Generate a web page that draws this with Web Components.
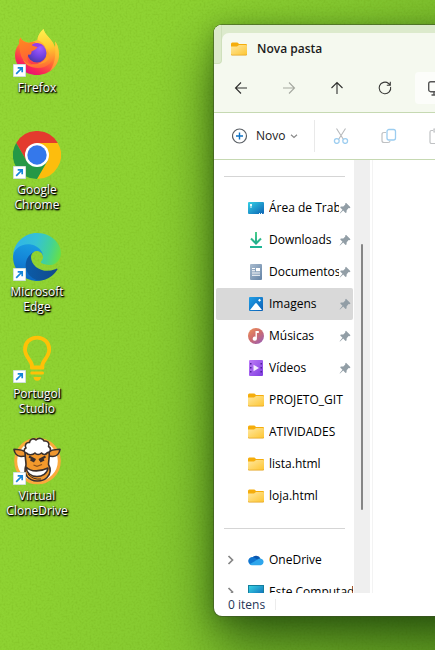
<!DOCTYPE html>
<html lang="pt-BR">
<head>
<meta charset="utf-8">
<meta name="viewport" content="width=device-width, initial-scale=1">
<title>Nova pasta</title>
<style>
html, body { height: 100%; margin: 0; }
body { font: 12px/16px "Open Sans", "Noto Sans", sans-serif; color: #000; overflow: hidden; }
</style>
</head>
<body>
<desk-top>
  <desk-shortcut icon="firefox">Firefox</desk-shortcut>
  <desk-shortcut icon="chrome">Google Chrome</desk-shortcut>
  <desk-shortcut icon="edge">Microsoft Edge</desk-shortcut>
  <desk-shortcut icon="bulb">Portugol Studio</desk-shortcut>
  <desk-shortcut icon="sheep">Virtual CloneDrive</desk-shortcut>
  <explorer-window slot="window">
    <window-tab slot="tab" icon="folder">Nova pasta</window-tab>
    <nav-bar slot="nav"></nav-bar>
    <command-bar slot="commands"></command-bar>
    <side-pane slot="side">
      <side-rule></side-rule>
      <side-item icon="desktop" pinned>Área de Trabalho</side-item>
      <side-item icon="download" pinned>Downloads</side-item>
      <side-item icon="document" pinned>Documentos</side-item>
      <side-item icon="image" pinned selected>Imagens</side-item>
      <side-item icon="music" pinned>Músicas</side-item>
      <side-item icon="video" pinned>Vídeos</side-item>
      <side-item icon="folder">PROJETO_GIT</side-item>
      <side-item icon="folder">ATIVIDADES</side-item>
      <side-item icon="folder">lista.html</side-item>
      <side-item icon="folder">loja.html</side-item>
      <side-rule></side-rule>
      <side-item icon="onedrive" expandable>OneDrive</side-item>
      <side-item icon="computer" expandable>Este Computador</side-item>
    </side-pane>
    <span slot="status">0 itens</span>
  </explorer-window>
</desk-top>

<script>
const ICONS = {
  firefox: [48, `<defs>
    <linearGradient id="a" x1=".8" y1="0" x2=".3" y2="1"><stop offset="0" stop-color="#fff14a"/><stop offset=".35" stop-color="#ffb52e"/><stop offset=".6" stop-color="#ff6a33"/><stop offset=".85" stop-color="#f8235a"/><stop offset="1" stop-color="#e0107c"/></linearGradient>
    <linearGradient id="b" x1=".4" y1="0" x2=".5" y2="1"><stop offset="0" stop-color="#fff350"/><stop offset=".5" stop-color="#ffca30"/><stop offset="1" stop-color="#ff6a33"/></linearGradient>
    <radialGradient id="c" cx=".65" cy=".25" r=".8"><stop offset="0" stop-color="#a15cff"/><stop offset=".6" stop-color="#7040dc"/><stop offset="1" stop-color="#4b3aa5"/></radialGradient>
    <linearGradient id="d" x1=".3" y1="0" x2=".5" y2="1"><stop offset="0" stop-color="#ff8a20"/><stop offset="1" stop-color="#ff5b38"/></linearGradient></defs>
    <path fill="url(#a)" d="M7.500 8.500C6 11 6 13 6.300 14.500C3.500 18 2 22 2 26C2 37 11.500 46 24 46C36.500 46 46 37 46 25.500C46 20 44.500 15 42 12.500C42.500 15 42.500 16.500 42 18C40 12 36.500 9.500 34 6.500C31.500 4 31 2 30.500 0C27 3 24.500 7 24.500 11L16 14C13 13 9 12 7.500 8.500Z"/>
    <path fill="url(#b)" d="M30.500 0C31 3 33 5 35.500 8C39 12 41.500 16 41.500 22C41.500 33 34 39 25 39C17 39 11.500 35.500 10 30C15 36 27 38 32 30C36 23 32.500 17 29.500 14C27 12 25.500 11 24.500 11C24.500 7 27 3 30.500 0Z"/>
    <path fill="#ffcb39" d="M42 12.500C44.500 15 46 20 46 25.500C46 33 42 39 36.500 42.500C41 36 43 29 42 18Z" opacity=".5"/>
    <circle cx="24" cy="24" r="9.500" fill="url(#c)"/>
    <path fill="#983bea" d="M17 17C20 13 27 13 31 17C28 16.500 26 17 24 18.500Z"/>
    <path fill="url(#d)" d="M7.500 8.500C9 12 12 14 16 13.700C18 12.700 21 12.800 23 13.300C20.500 14 19 15.300 19 16.500C21 17.500 23.500 17.500 24.500 18C24 20 21 21 18.500 22.500C18.500 25 18 26 15.500 25.500C13 29 15 34 20 36C11 35 6.500 29 6.300 14.500C6 13 6 11 7.500 8.500Z"/>
    <path fill="#ff9d2b" d="M33.500 19C36 25 33 33 25 34.500C30 35.500 36 32 37 27Z"/>`],
  chrome: [48, `<path fill="#e33b2e" d="M24 12H44.800A24 24 0 0 0 3.200 12L13.600 30Z"/>
    <path fill="#fdbd0d" d="M44.800 12A24 24 0 0 1 24 48L34.400 30L24 12Z"/>
    <path fill="#259846" d="M3.200 12A24 24 0 0 0 24 48L34.400 30H24L13.600 30Z"/>
    <circle cx="24" cy="24" r="12" fill="#fff"/><circle cx="24" cy="24" r="9.700" fill="#3478eb"/>`],
  edge: [256, `<defs>
    <linearGradient id="a" x1=".2" y1=".5" x2="1" y2=".5"><stop offset="0" stop-color="#0c59a4"/><stop offset="1" stop-color="#114a8b"/></linearGradient>
    <linearGradient id="b" x1=".6" y1="0" x2=".4" y2="1"><stop offset="0" stop-color="#1ba0e2"/><stop offset=".5" stop-color="#1384d8"/><stop offset="1" stop-color="#0a64c0"/></linearGradient>
    <linearGradient id="c" x1="0" y1=".4" x2="1" y2=".6"><stop offset="0" stop-color="#2fb3ea"/><stop offset=".45" stop-color="#36c2d4"/><stop offset=".75" stop-color="#42d298"/><stop offset="1" stop-color="#66e048"/></linearGradient></defs>
    <path fill="url(#a)" d="M231 190.500c-3.400 1.800-6.900 3.400-10.500 4.700a101.400 101.400 0 0 1-35.900 6.500c-47.300 0-88.500-32.500-88.500-74.300.1-11.400 6.300-21.900 16.400-27.200-42.800 1.800-53.800 46.400-53.800 72.500 0 73.900 68.100 81.400 82.800 81.400 7.900 0 19.800-2.300 27-4.600l1.300-.4a128.300 128.300 0 0 0 66.600-52.800 4 4 0 0 0-5.400-5.800z"/>
    <path fill="url(#b)" d="M105.700 241.400A79.200 79.200 0 0 1 83 220.100a80.700 80.700 0 0 1 29.500-120c3.200-1.500 8.500-4.100 15.600-4 10.100.1 19.700 4.900 25.700 13 4 5.400 6.300 11.900 6.400 18.700 0-.2 24.500-79.600-80-79.600-43.900 0-80 41.700-80 78.200-.2 19.300 4 38.500 12.100 56a128 128 0 0 0 156.400 67 75.500 75.500 0 0 1-62.800-8z"/>
    <path fill="url(#c)" d="M152.300 148.900c-.9 1-3.400 2.500-3.400 5.600 0 2.600 1.700 5.200 4.800 7.300 14.300 10 41.400 8.600 41.500 8.600 10.700 0 21.100-2.900 30.300-8.300 18.800-11 30.400-31.100 30.400-52.900.3-22.400-8-37.300-11.300-43.900C223.300 23.800 177.700 0 128 0 58 0 1 56.200 0 126.200c.5-36.500 36.800-66 80-66 3.500 0 23.500.3 42 10.100 16.300 8.600 24.900 18.900 30.800 29.200 6.200 10.700 7.300 24.100 7.300 29.500 0 5.300-2.700 13.300-7.800 19.900z"/>`],
  bulb: [48, `<path d="M19 31C19 26 12 22 12 14.500C12 7.500 17 2.700 24 2.700S36.200 7.500 36.200 14.500C36.200 22 29.200 26 29.200 31" fill="none" stroke="#ffc107" stroke-width="3.800"/>
    <path fill="#ffc107" d="M17 30.500H31.300V33Q31.300 34.500 29.800 34.500H18.500Q17 34.500 17 33ZM18.500 36.500H29.800Q31 36.500 31 38T29.500 39.600H18.700Q17.300 39.600 17.300 38T18.500 36.500ZM20.500 42H28Q27.800 45.700 24.200 45.700T20.500 42Z"/>`],
  sheep: [48, `<circle cx="24.500" cy="24" r="21.800" fill="#fff" stroke="#fbaa3c" stroke-width="3"/>
    <g stroke="#3a302c" stroke-width="1.600" stroke-linejoin="round">
    <path fill="#f0962f" d="M12 14.500C8 12 4 12.800 1 12.300C1.500 16 4 19.500 8 19.500L13 19ZM36 14.500C40 12 44 12.800 47 12.300C46.500 16 44 19.500 40 19.500L35 19Z"/>
    <path fill="#f39a2c" d="M12.500 14H36C37 19 35.500 23 35.500 27.500C38 32 37.500 37 34 40.500C29 45.500 19 45 14.500 40C11.500 36.500 11.500 32 13 28C13 23 11.500 19 12.500 14Z"/>
    <path fill="#fff" d="M13.500 16C10.500 15.500 10.500 12 13 11C11 8 13.500 5 16.500 5.500C17 2 21 .8 23 3C26 .2 30 1.500 31 4C34.500 3.500 37 6 35.500 9.500C38.500 11 38 15.500 34.500 15.500C33 18 30 18 28.500 16C26.500 18 23.500 18 22 16C20 18 15 18.500 13.500 16Z"/>
    <path fill="#fff" d="M13 30C18 35.500 28 34.500 35 31C34.500 36.500 29 39.500 24 39.500C18 39.500 13.500 36 13 30Z"/></g>
    <path d="M16 19.500L22.500 23M32.500 19.500L26 23M17.500 22.500L21.500 24.500M31 22.500L27 24.500" fill="none" stroke="#3a302c" stroke-width="2"/>
    <path d="M20.500 28L24 29.300L29 27.500" fill="none" stroke="#8b531c" stroke-width="1.300"/>
    <path d="M15 37Q20 43 28 42" fill="none" stroke="#3a302c"/>`],
  shortcut: [13, `<path fill="#fff" stroke="#cfe0dc" d="M.5.5H12.500V12.500H.5Z"/><path fill="none" stroke="#1586d9" stroke-width="1.700" d="M3.200 9.800L8.500 4.500M4.700 3.800H9.200V8.300"/>`],
  folder: [16, `<defs><linearGradient id="a" x2="1" y2="1"><stop offset="0" stop-color="#ffe8a0"/><stop offset="1" stop-color="#fdc634"/></linearGradient></defs>
    <path fill="#f5ad0c" d="M0 3Q0 1.500 1.300 1.500H6Q7 1.500 7.500 2.500L8 3H15Q16 3 16 4V6H0Z"/>
    <path fill="#e4a11b" d="M0 6H16V13.500Q16 14.500 15 14.500H1Q0 14.500 0 13.500Z"/>
    <path fill="url(#a)" d="M0 5.500H6L8 4H15Q16 4 16 5V12.700Q16 13.700 15 13.700H1Q0 13.700 0 12.700Z"/>`],
  desktop: [16, `<defs><linearGradient id="a" x2="1" y2="1"><stop offset="0" stop-color="#35d1e6"/><stop offset="1" stop-color="#0b62b4"/></linearGradient></defs>
    <rect y="2" width="16" height="12" rx="1" fill="url(#a)"/><path fill="#e9fbff" d="M2 4H4V6H2ZM2 6.500H4V7.500H2ZM11 13H12V14H11ZM13 13H14V14H13Z"/>`],
  computer: [16, `<defs><linearGradient id="a" x2="1" y2="1"><stop offset="0" stop-color="#38d6e6"/><stop offset="1" stop-color="#0b62b4"/></linearGradient></defs>
    <rect x=".5" y="1.500" width="15" height="11" fill="url(#a)" stroke="#137f9d"/><path fill="#63808f" d="M5 14H11V15H5Z"/>`],
  download: [16, `<defs><linearGradient id="a" gradientUnits="userSpaceOnUse" x1="8" y1="0" x2="8" y2="16"><stop offset="0" stop-color="#4bd08b"/><stop offset="1" stop-color="#0d9e8d"/></linearGradient></defs>
    <path fill="none" stroke="url(#a)" stroke-width="2" d="M8.010 0L8 11.500M3 6.500L8 11.500L13 6.500"/><path fill="#1fb594" d="M2 14H14V16H2Z"/>`],
  document: [16, `<defs><linearGradient id="a" x2="1" y2="1"><stop offset="0" stop-color="#a9bccf"/><stop offset="1" stop-color="#6483a6"/></linearGradient></defs>
    <rect x="2" width="12" height="16" rx="1" fill="url(#a)"/><path fill="#fff" d="M4 4H7V5H4ZM4 6.200H7V7.200H4ZM8 4H12V7.200H8ZM4 8.500H12V9.500H4ZM4 10.800H12V11.800H4Z"/>`],
  image: [16, `<defs><linearGradient id="a" x2="1" y2="1"><stop offset="0" stop-color="#229fe6"/><stop offset="1" stop-color="#0a5fb5"/></linearGradient></defs>
    <rect x="1" y="1" width="14" height="14" rx="1" fill="url(#a)"/><path fill="#fff" d="M2 14L7.200 7.500Q8 6.700 8.800 7.500L14 14ZM11.500 2.700L13 4.200L11.500 5.700L10 4.200Z"/>`],
  music: [16, `<defs><linearGradient id="a" x2=".8" y2="1"><stop offset="0" stop-color="#f0945a"/><stop offset=".5" stop-color="#cf6d6c"/><stop offset="1" stop-color="#9d5fb0"/></linearGradient></defs>
    <circle cx="8" cy="8" r="8" fill="url(#a)"/><path fill="#fff" d="M7.500 3H10.800V5H8.900V10.700A2.100 2.100 0 1 1 7.500 8.700Z"/>`],
  video: [16, `<defs><linearGradient id="a" x2="1" y2="1"><stop offset="0" stop-color="#be7df8"/><stop offset="1" stop-color="#7e3be0"/></linearGradient></defs>
    <rect x="1" y="0" width="14" height="16" rx="1" fill="url(#a)"/><path fill="#4f2199" d="M2 3H3.500V4.500H2ZM2 7H3.500V8.500H2ZM2 11H3.500V12.500H2ZM12.500 3H14V4.500H12.500ZM12.500 7H14V8.500H12.500ZM12.500 11H14V12.500H12.500Z"/><path fill="#f4ecff" d="M5.500 4.700L11 8L5.500 11.300Z"/>`],
  onedrive: [16, `<path fill="#0b56ae" d="M4 6A4.800 4.800 0 0 1 12.500 6.500L9 10Z"/><path fill="#0f75d0" d="M4 13A4 4 0 1 1 6.500 5.700L12 9L6 13Z"/><path fill="#2fa6ec" d="M3.500 13.200L1.500 12.200L9.500 7.500Q11 6.300 12.700 6.700A3.300 3.300 0 0 1 13 13.200Z"/>`],
  pin: [12, `<path fill="#929ea6" d="M7 .8L11.500 5.200L10.500 6.200L9.600 6L7.700 8.200L7.500 10.500L6.500 11L4.200 8.500L1 11.500L.6 11.200L3.500 7.700L1.200 5.500L1.800 4.500L4.300 4.400L6.300 2.500L6.100 1.700Z"/>`],
  chevron: [12, `<path fill="none" stroke="#858585" stroke-width="1.700" d="M4.500 2L8.500 6L4.500 10"/>`],
  down: [8, `<path fill="none" stroke="#8a8a8a" stroke-width="1.200" d="M1 2.700L4 5.500L7 2.700"/>`],
  back: [16, `<path fill="none" stroke="#2f302e" stroke-width="1.100" d="M14 8H2.500M8 2.500L2.500 8L8 13.500"/>`],
  forward: [16, `<path fill="none" stroke="#a5a9a0" stroke-width="1.100" d="M2 8H13.500M8 2.500L13.500 8L8 13.500"/>`],
  up: [16, `<path fill="none" stroke="#2f302e" stroke-width="1.100" d="M8 14V2.500M2.500 8L8 2.500L13.500 8"/>`],
  reload: [16, `<path fill="none" stroke="#3a3b38" stroke-width="1.100" d="M13.600 6.800A5.800 5.800 0 1 1 11.600 3.500L13.300 5.200M13.300 1.800V5.300H9.800"/>`],
  monitor: [16, `<rect x=".7" y="1.700" width="14.600" height="10" rx="2" fill="none" stroke="#555" stroke-width="1.400"/><path stroke="#555" stroke-width="1.400" d="M6 12V15M10 12V15M3.500 15H12.500"/>`],
  plus: [16, `<circle cx="7.500" cy="8" r="7" fill="none" stroke="#5b6066" stroke-width="1.200"/><path stroke="#0f72c4" stroke-width="1.400" d="M7.500 4.500V11.500M4 8H11"/>`],
  cut: [16, `<path fill="none" stroke="#b7b9bb" stroke-width="1.100" d="M3.500 .5L10.500 11.500M12.500 .5L5.500 11.500"/><g fill="none" stroke="#9ccdf0" stroke-width="1.300"><circle cx="3.800" cy="13" r="2.400"/><circle cx="12.200" cy="13" r="2.400"/></g>`],
  copy: [16, `<path fill="none" stroke="#bfc1c3" stroke-width="1.200" d="M5 4.500H3Q1 4.500 1 6.500V12.500Q1 14.500 3 14.500H7Q9 14.500 9 13"/><rect x="6" y="1.500" width="8.500" height="10.500" rx="2" fill="none" stroke="#9ccdf0" stroke-width="1.300"/>`],
  paste: [16, `<path fill="none" stroke="#bfc1c3" stroke-width="1.200" d="M4 2.500H2.500Q1 2.500 1 4V14Q1 15.500 2.500 15.500H6M5 1H10V4H5Z"/><rect x="8" y="6" width="7" height="9.500" rx="1.500" fill="none" stroke="#9ccdf0"/>`]
};

function define(name, template, setup) {
  const t = document.createElement('template');
  t.innerHTML = template;
  customElements.define(name, class extends HTMLElement {
    constructor() {
      super();
      this.attachShadow({ mode: 'open' }).append(t.content.cloneNode(true));
    }
    connectedCallback() { if (setup) setup(this, this.shadowRoot); }
  });
}

const passIcon = (host, root) => root.querySelector('.icon').setAttribute('name', host.getAttribute('icon'));

customElements.define('ui-icon', class extends HTMLElement {
  static observedAttributes = ['name'];
  constructor() { super(); this.attachShadow({ mode: 'open' }); }
  attributeChangedCallback() {
    const [size, art] = ICONS[this.getAttribute('name')] || [16, ''];
    this.shadowRoot.innerHTML = `<style>:host{display:block;flex:none;width:16px;height:16px}svg{display:block;width:100%;height:100%}</style>
      <svg viewBox="0 0 ${size} ${size}" aria-hidden="true">${art}</svg>`;
  }
});

/* Fine wallpaper grain, painted between the wallpaper and everything on it. */
define('wall-grain', `
<style>
  :host { position: absolute; inset: 0; pointer-events: none; opacity: .4; }
  svg { display: block; width: 100%; height: 100%; }
</style>
<svg aria-hidden="true"><filter id="g" x="0" y="0" width="100%" height="100%"><feTurbulence type="fractalNoise" baseFrequency=".5" numOctaves="2" seed="4"/><feColorMatrix values="0 0 0 0 .1  0 0 0 0 .25  0 0 0 0 0  .9 0 0 0 -.38"/></filter><rect width="100%" height="100%" filter="url(#g)"/></svg>`);

define('desk-top', `
<style>
  :host { display: block; position: relative; height: 100%; overflow: hidden;
    background: linear-gradient(105deg, #95d736 0%, #8ed232 30%, #84c830 60%, #70b028 100%); }
  nav { position: relative; display: grid; grid-template-columns: 74px; grid-auto-rows: 102px; padding-top: 29px; }
</style>
<wall-grain></wall-grain>
<nav aria-label="Área de trabalho"><slot></slot></nav>
<slot name="window"></slot>`);

define('desk-shortcut', `
<style>
  :host { display: block; }
  button { display: grid; justify-items: center; gap: 3px; width: 100%; padding: 0; border: 0; background: none;
    font: inherit; line-height: 15px; color: #fff; text-shadow: 0 1px 2px #000, 1px 1px 2px #000, 1px 1px 1px #000; }
  .art { position: relative; }
  .icon { width: 48px; height: 48px; }
  .badge { position: absolute; left: 0; bottom: 0; width: 13px; height: 13px; }
</style>
<button type="button"><span class="art"><ui-icon class="icon"></ui-icon><ui-icon class="badge" name="shortcut"></ui-icon></span><span><slot></slot></span></button>`, passIcon);

define('explorer-window', `
<style>
  :host { position: absolute; left: 214px; right: -240px; top: 25px; bottom: 34px; display: grid;
    grid-template-rows: 39px 49px 47px minmax(0, 1fr) 23px; grid-template-columns: minmax(0, 1fr); overflow: hidden; border-radius: 8px; background: #fff;
    box-shadow: 0 0 0 1px rgba(60,80,40,.55), 0 26px 54px rgba(0,30,0,.62), 0 2px 20px rgba(10,40,0,.25); }
  header { background: #dceacc; display: flex; align-items: end; }
  .body { display: grid; grid-template-columns: 158px minmax(0, 1fr); min-height: 0; }
  main { border-left: 1px solid #f3f3f3; background: #fff; }
  footer { display: flex; align-items: center; padding-left: 14px; gap: 10px; color: #1f3657; }
  footer i { width: 1px; height: 11px; background: #ececec; }
</style>
<header><slot name="tab"></slot></header>
<slot name="nav"></slot>
<slot name="commands"></slot>
<div class="body"><slot name="side"></slot><main></main></div>
<footer><slot name="status"></slot><i></i></footer>`);

define('window-tab', `
<style>
  :host { display: flex; flex: 1; align-items: end; background: #f5f9ef; height: 39px; }
  .edge { width: 8px; height: 39px; box-sizing: border-box; background: #dceacc; border: solid #cfe0bc; border-width: 0 1px 1px 0; border-radius: 0 0 4px 0; }
  .cap { flex: 1; align-self: stretch; background: #dceacc; display: flex; align-items: end; }
  button { flex: 1; display: flex; align-items: center; gap: 10px; height: 31px; padding: 0 0 0 9px; border: 0;
    border-radius: 7px 0 0 0; background: #f5f9ef; font: inherit; font-weight: 600; color: #1b1b1b; }
</style>
<span class="edge"></span><div class="cap"><button type="button"><ui-icon class="icon"></ui-icon><span><slot></slot></span></button></div>`, passIcon);

define('nav-bar', `
<style>
  :host { display: flex; align-items: center; padding: 0 3px; background: #f5f9ef; border-bottom: 1px solid #c6d9b2; }
  button { display: grid; place-items: center; width: 48px; height: 32px; padding: 0; border: 0; background: none; }
  .address { flex: 1; display: flex; align-items: center; height: 32px; margin-left: 6px; padding-left: 13px; border-radius: 4px; background: #fcfdfa; }
  input { flex: 1; min-width: 0; border: 0; background: none; font: inherit; outline: 0; }
</style>
<button type="button" aria-label="Voltar"><ui-icon name="back"></ui-icon></button>
<button type="button" aria-label="Avançar" disabled><ui-icon name="forward"></ui-icon></button>
<button type="button" aria-label="Acima"><ui-icon name="up"></ui-icon></button>
<button type="button" aria-label="Atualizar"><ui-icon name="reload"></ui-icon></button>
<label class="address"><ui-icon name="monitor"></ui-icon><input type="text" aria-label="Endereço"></label>`);

define('command-bar', `
<style>
  :host { display: flex; align-items: center; background: #fff; border-bottom: 1px solid #c6d9b2; }
  button { display: grid; place-items: center; width: 48px; height: 32px; padding: 0; border: 0; background: none; font: inherit; color: #1b1b1b; }
  .new { display: flex; gap: 8px; width: 100px; padding-left: 18px; align-items: center; }
  .new .more { width: 8px; height: 8px; margin-left: -3px; }
  i { width: 1px; height: 32px; margin-right: 2px; background: #e9e9e9; }
</style>
<button class="new" type="button"><ui-icon name="plus"></ui-icon><span>Novo</span><ui-icon class="more" name="down"></ui-icon></button><i></i>
<button type="button" aria-label="Recortar" disabled><ui-icon name="cut"></ui-icon></button>
<button type="button" aria-label="Copiar" disabled><ui-icon name="copy"></ui-icon></button>
<button type="button" aria-label="Colar" disabled><ui-icon name="paste"></ui-icon></button>`);

define('side-pane', `
<style>
  :host { display: grid; grid-template-columns: minmax(0, 1fr) 16px; padding-right: 2px; min-height: 0; }
  nav { overflow: hidden; padding: 0 1px 0 2px; }
  .bar { display: grid; grid-template-rows: 84fr 266fr 83fr; justify-content: center; background: #efefef; }
  .thumb { grid-row: 2; width: 2px; background: #858585; border-radius: 1px; }
</style>
<nav aria-label="Painel de navegação"><slot></slot></nav>
<div class="bar"><div class="thumb"></div></div>`);

define('side-rule', `
<style>:host { display: flex; align-items: center; height: 32px; padding: 0 8px; } hr { flex: 1; height: 1px; margin: 0; border: 0; background: #d5d5d5; }</style>
<hr>`);

define('side-item', `
<style>
  :host { display: block; }
  a { display: flex; align-items: center; height: 32px; border-radius: 2px; color: inherit; text-decoration: none; }
  :host([selected]) a { background: #d9d9d9; }
  .open { width: 12px; height: 12px; margin: 0 12px 0 8px; visibility: hidden; }
  :host([expandable]) .open { visibility: visible; }
  .label { flex: 1; min-width: 0; margin-left: 5px; overflow: hidden; white-space: nowrap; }
  .pin { display: none; width: 12px; height: 12px; margin-right: 2px; }
  :host([pinned]) .pin { display: block; }
</style>
<a href="#"><ui-icon class="open" name="chevron"></ui-icon><ui-icon class="icon"></ui-icon><span class="label"><slot></slot></span><ui-icon class="pin" name="pin"></ui-icon></a>`, passIcon);
</script>
</body>
</html>
